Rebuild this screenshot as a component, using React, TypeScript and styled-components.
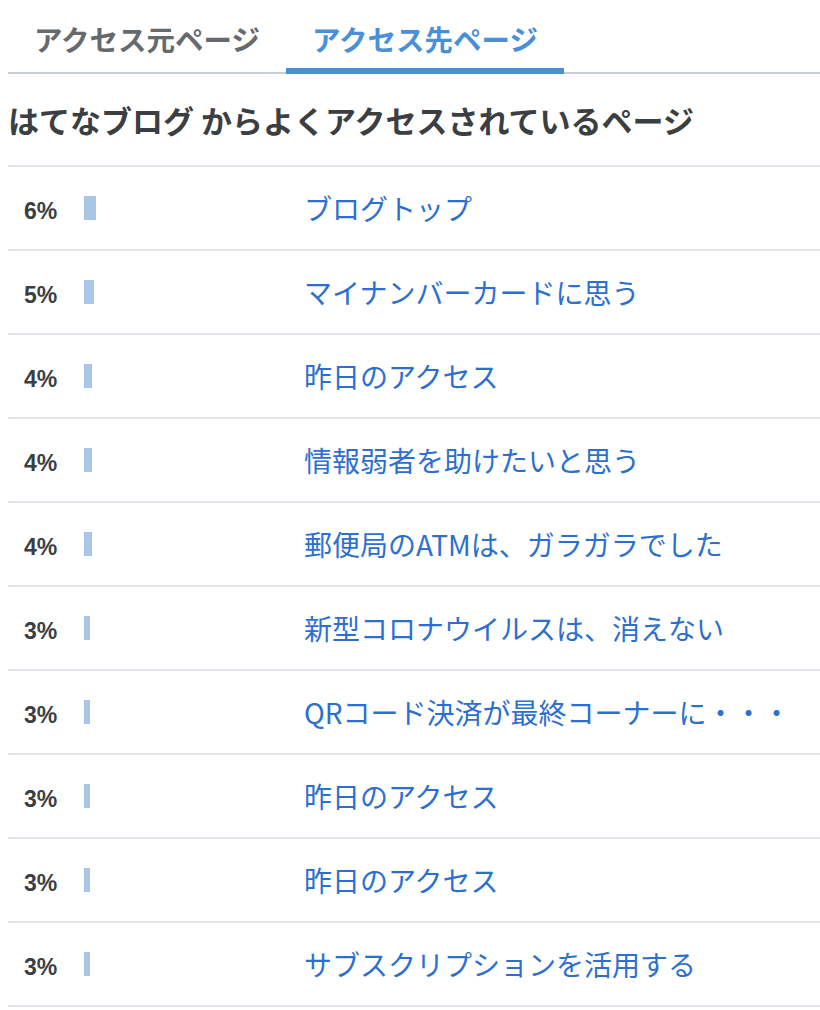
import React from 'react';
import styled, { createGlobalStyle } from 'styled-components';

const GlobalStyle = createGlobalStyle`
  body {
    margin: 0;
    background: #fff;
    font-family: "Noto Sans CJK JP", "Liberation Sans", sans-serif;
  }
`;

const rows = [
  { pct: 6, title: 'ブログトップ' },
  { pct: 5, title: 'マイナンバーカードに思う' },
  { pct: 4, title: '昨日のアクセス' },
  { pct: 4, title: '情報弱者を助けたいと思う' },
  { pct: 4, title: '郵便局のATMは、ガラガラでした' },
  { pct: 3, title: '新型コロナウイルスは、消えない' },
  { pct: 3, title: 'QRコード決済が最終コーナーに・・・' },
  { pct: 3, title: '昨日のアクセス' },
  { pct: 3, title: '昨日のアクセス' },
  { pct: 3, title: 'サブスクリプションを活用する' }
];

function App() {
  return (
    <>
      <GlobalStyle />
      <Page>
        <Tabs>
          <Tab>アクセス元ページ</Tab>
          <Tab $active>アクセス先ページ</Tab>
        </Tabs>
        <Heading>はてなブログ からよくアクセスされているページ</Heading>
        <List>
          {rows.map((row, i) => (
            <Row key={i}>
              <Pct>{row.pct}%</Pct>
              <BarCell>
                <Bar style={{ width: row.pct * 2 }} />
              </BarCell>
              <Link href="#">{row.title}</Link>
            </Row>
          ))}
        </List>
      </Page>
    </>
  );
}

export default App;

const Page = styled.div`
  padding-left: 8px;
  padding-top: 9px;
`;

const Tabs = styled.div`
  display: flex;
  border-bottom: 2px solid #c6ced6;
`;

const Tab = styled.div<{ $active?: boolean }>`
  width: 278px;
  height: 65px;
  box-sizing: border-box;
  display: flex;
  align-items: center;
  justify-content: center;
  font-size: 28.5px;
  font-weight: bold;
  color: ${(p) => (p.$active ? '#4a90d9' : '#666a6e')};
  border-bottom: 6px solid ${(p) => (p.$active ? '#4a90d9' : 'transparent')};
  margin-bottom: -2px;
`;

const Heading = styled.h2`
  margin: 0;
  padding: 26px 0 25px;
  line-height: 40px;
  font-size: 31px;
  font-weight: bold;
  color: #3c3f42;
  border-bottom: 2px solid #dfe3e7;
`;

const List = styled.div`
  display: flex;
  flex-direction: column;
`;

const Row = styled.div`
  display: grid;
  grid-template-columns: 60px 220px 1fr;
  align-items: center;
  height: 84px;
  box-sizing: border-box;
  padding-left: 16px;
  border-bottom: 2px solid #dfe3e7;
`;

const Pct = styled.div`
  font-size: 23px;
  font-weight: bold;
  color: #3c3f42;
  font-family: "Liberation Sans", sans-serif;
  padding-top: 6px;
`;

const BarCell = styled.div`
  display: flex;
  align-items: center;
`;

const Bar = styled.div`
  height: 24px;
  background: #a9c6e6;
`;

const Link = styled.a`
  font-size: 28px;
  color: #2d6fcf;
  text-decoration: none;
  white-space: nowrap;
`;
